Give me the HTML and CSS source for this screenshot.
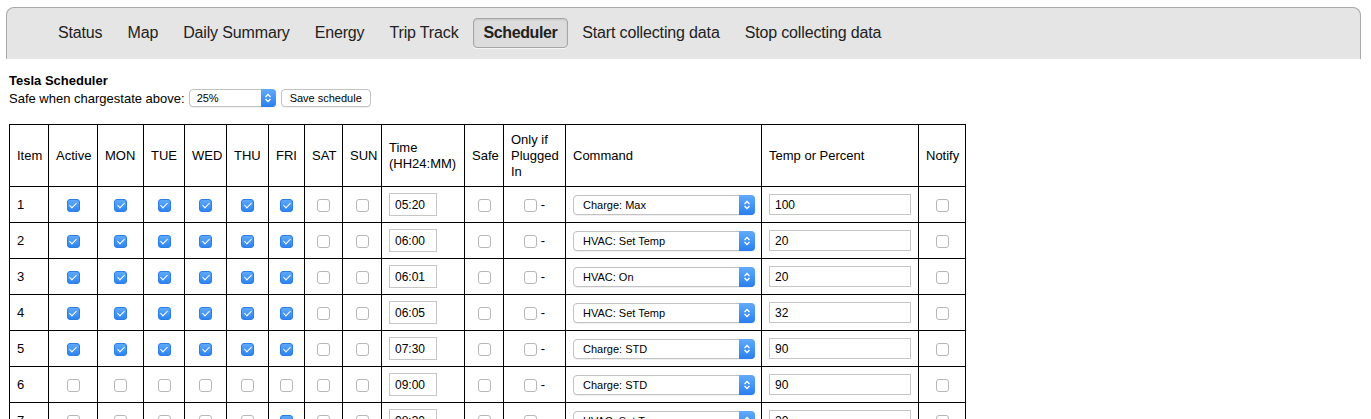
FILE: index.html
```html
<!DOCTYPE html>
<html lang="en">
<head>
<meta charset="UTF-8" />
<title>Tesla Scheduler</title>
<meta name="viewport" content="width=device-width, initial-scale=1" />
<link rel="stylesheet" href="styles.css">
</head>
<body>

<ul class="nav">
  <li><a href="#">Status</a></li>
  <li><a href="#">Map</a></li>
  <li><a href="#">Daily Summary</a></li>
  <li><a href="#">Energy</a></li>
  <li><a href="#">Trip Track</a></li>
  <li><a href="#" class="current">Scheduler</a></li>
  <li><a href="#">Start collecting data</a></li>
  <li><a href="#">Stop collecting data</a></li>
</ul>

<div class="panel">
  <div class="title">Tesla Scheduler</div>
  <div class="safe-row">
    Safe when chargestate above:
    <span class="pick small">
      <select><option>25%</option><option>50%</option><option>75%</option></select>
      <span class="cap"><svg width="8" height="10" viewBox="0 0 8 10"><path d="M1.5 4 4 1.5 6.5 4M1.5 6 4 8.5 6.5 6" fill="none" stroke="#fff" stroke-width="1.3"/></svg></span>
    </span>
    <button class="save">Save schedule</button>
  </div>

  <table class="sched">
    <colgroup>
      <col style="width:39px"><col style="width:49px"><col style="width:46px"><col style="width:41px">
      <col style="width:42px"><col style="width:42px"><col style="width:36px"><col style="width:38px">
      <col style="width:39px"><col style="width:83px"><col style="width:39px"><col style="width:62px">
      <col style="width:196px"><col style="width:157px"><col style="width:47px">
    </colgroup>
    <thead>
      <tr>
        <th>Item</th><th>Active</th><th>MON</th><th>TUE</th><th>WED</th><th>THU</th><th>FRI</th><th>SAT</th><th>SUN</th>
        <th>Time<br>(HH24:MM)</th><th>Safe</th><th>Only if<br>Plugged<br>In</th><th>Command</th><th>Temp or Percent</th><th>Notify</th>
      </tr>
    </thead>
    <tbody id="rows"></tbody>
  </table>
</div>

<script>
var items = [
  { on: [1,1,1,1,1,1,0,0], time: '05:20', cmd: 'Charge: Max', val: '100' },
  { on: [1,1,1,1,1,1,0,0], time: '06:00', cmd: 'HVAC: Set Temp', val: '20' },
  { on: [1,1,1,1,1,1,0,0], time: '06:01', cmd: 'HVAC: On', val: '20' },
  { on: [1,1,1,1,1,1,0,0], time: '06:05', cmd: 'HVAC: Set Temp', val: '32' },
  { on: [1,1,1,1,1,1,0,0], time: '07:30', cmd: 'Charge: STD', val: '90' },
  { on: [0,0,0,0,0,0,0,0], time: '09:00', cmd: 'Charge: STD', val: '90' },
  { on: [0,0,0,0,0,1,0,0], time: '08:30', cmd: 'HVAC: Set Temp', val: '20' }
];
var commands = ['Charge: Max', 'Charge: STD', 'HVAC: On', 'HVAC: Off', 'HVAC: Set Temp'];
var cap = '<span class="cap"><svg width="8" height="10" viewBox="0 0 8 10"><path d="M1.5 4 4 1.5 6.5 4M1.5 6 4 8.5 6.5 6" fill="none" stroke="#fff" stroke-width="1.3"/></svg></span>';

function box(checked) {
  return '<input type="checkbox"' + (checked ? ' checked' : '') + '>';
}

var html = '';
items.forEach(function (it, i) {
  html += '<tr><td>' + (i + 1) + '</td>';
  it.on.forEach(function (v) { html += '<td class="c">' + box(v) + '</td>'; });
  html += '<td><input class="time" type="text" value="' + it.time + '"></td>';
  html += '<td class="c">' + box(0) + '</td>';
  html += '<td class="c">' + box(0) + ' -</td>';
  html += '<td><span class="pick"><select>';
  commands.forEach(function (c) {
    html += '<option' + (c === it.cmd ? ' selected' : '') + '>' + c + '</option>';
  });
  html += '</select>' + cap + '</span></td>';
  html += '<td><input class="val" type="text" value="' + it.val + '"></td>';
  html += '<td class="c">' + box(0) + '</td></tr>';
});
document.getElementById('rows').innerHTML = html;
</script>

</body>
</html>
```

FILE: styles.css
```css
body { margin:0; padding:7px 10px 0 6px; font-family:"Liberation Sans", Arial, sans-serif; color:#000; background:#fff; }

.nav {
  list-style:none; margin:0; padding:0 0 2px 40px; height:49px;
  display:flex; align-items:center; gap:3px;
  background:#e5e5e5; border:1px solid #a9a9a9; border-bottom:none; border-radius:8px 8px 0 0;
}
.nav a {
  display:block; padding:5px 10px; font-size:16px; line-height:18px; color:#222; text-decoration:none;
  border:1px solid transparent; border-radius:4px; letter-spacing:-0.15px;
}
.nav a.current {
  font-weight:bold; letter-spacing:-0.4px; background:#dcdcdc; border-color:#a6a6a6;
  box-shadow:inset 0 1px 2px rgba(0,0,0,0.12), 0 1px 0 rgba(255,255,255,0.6);
}

.panel { padding:14px 0 0 3px; font-size:13px; }
.title { font-weight:bold; line-height:15px; }
.safe-row { display:flex; align-items:center; gap:4px; height:18px; margin-top:1px; }

.pick { position:relative; display:inline-block; vertical-align:middle; }
.pick select {
  appearance:none; -webkit-appearance:none; display:block; margin:0;
  width:182px; height:20px; padding:0 20px 0 9px;
  font:11px "Liberation Sans", Arial, sans-serif; color:#000;
  background:#fff; border:1px solid #c2c2c2; border-radius:4px;
  box-shadow:0 1px 1px rgba(0,0,0,0.07);
}
.pick .cap {
  position:absolute; top:0; right:0; width:16px; height:20px;
  display:flex; align-items:center; justify-content:center;
  background:linear-gradient(#62abfb, #2a7fee); border-radius:0 4px 4px 0;
}
.pick.small select { width:87px; height:18px; padding-left:7px; }
.pick.small .cap { height:18px; width:15px; }

.save {
  height:18px; padding:0 8px; margin:0 0 0 1px;
  font:11px "Liberation Sans", Arial, sans-serif; color:#000;
  background:#fff; border:1px solid #c2c2c2; border-radius:4px;
  box-shadow:0 1px 1px rgba(0,0,0,0.07);
}

.sched { margin-top:17px; border-collapse:collapse; table-layout:fixed; width:957px; font-size:13px; }
.sched th, .sched td { border:1px solid #000; padding:0 7px; vertical-align:middle; }
.sched th { font-weight:normal; text-align:left; height:61px; line-height:16px; }
.sched td { height:35px; }
.sched td.c { text-align:center; padding:0; }

.sched input[type=checkbox] {
  appearance:none; -webkit-appearance:none; position:relative;
  width:13px; height:13px; margin:0; vertical-align:middle;
  background:#fff; border:1px solid #b7b7b7; border-radius:3px;
}
.sched input[type=checkbox]:checked {
  background:linear-gradient(#5ea9fb, #2e84ef); border-color:#2c7de6;
}
.sched input[type=checkbox]:checked::after {
  content:""; position:absolute; left:3.5px; top:1px; width:3px; height:6px;
  border:solid #fff; border-width:0 1.6px 1.6px 0; transform:rotate(45deg);
}

.sched input[type=text] {
  margin:0; height:23px; padding:0 5px; box-sizing:border-box;
  font:12px "Liberation Sans", Arial, sans-serif; color:#000;
  border:1px solid #c6c6c6; vertical-align:middle;
}
.sched input.time { width:48px; }
.sched input.val { width:142px; height:21px; }
```
